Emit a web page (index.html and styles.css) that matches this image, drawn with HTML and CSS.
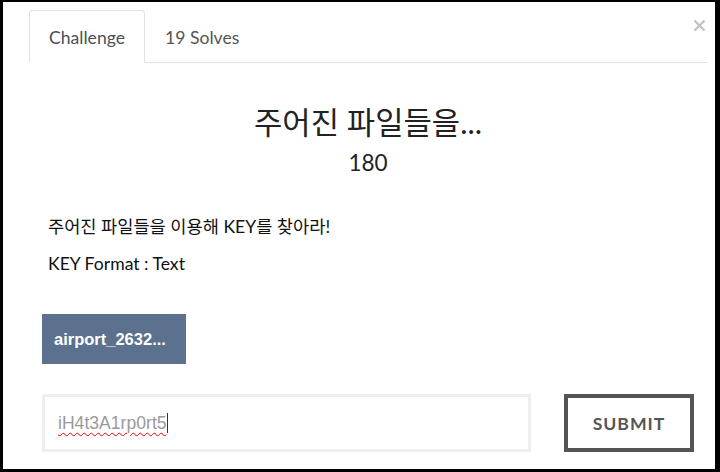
FILE: index.html
```html
<!DOCTYPE html>
<html lang="ko">
<head>
<meta charset="utf-8">
<link rel="stylesheet" href="styles.css">
</head>
<body>
<div class="modal">
  <button class="close" aria-label="Close">
    <svg width="13" height="13" viewBox="0 0 13 13"><path d="M1.5 1.5 L11.5 11.5 M11.5 1.5 L1.5 11.5" stroke="#c2c2c2" stroke-width="2.4" fill="none"/></svg>
  </button>
  <nav class="tabs">
    <a class="tab active">Challenge</a>
    <a class="tab">19 Solves</a>
  </nav>
  <div class="content">
    <h3 class="title">주어진 파일들을...</h3>
    <h4 class="value">180</h4>
    <div class="desc">
      <p>주어진 파일들을 이용해 KEY를 찾아라!</p>
      <p>KEY Format : Text</p>
    </div>
    <div class="files">
      <a class="file-btn">airport_2632...</a>
    </div>
    <div class="submit-row">
      <div class="input"><span class="typed">iH4t3A1rp0rt5</span><span class="caret"></span></div>
      <button class="submit">SUBMIT</button>
    </div>
  </div>
</div>
</body>
</html>
```
FILE: styles.css
```css
* { box-sizing: border-box; }
html, body { margin: 0; }
body {
  background: #000;
  padding: 2px 5px 3px 3px;
  font-family: Lato, "Noto Sans CJK KR", sans-serif;
  color: #212529;
}
.modal {
  position: relative;
  background: #fff;
  height: 467px;
  padding: 8px 8px 0 26px;
}
.close {
  position: absolute;
  top: 17px;
  left: 690px;
  width: 13px;
  height: 13px;
  padding: 0;
  border: 0;
  background: none;
  display: block;
}
.close svg { display: block; }
.tabs {
  display: flex;
  border-bottom: 1px solid #dee2e6;
}
.tab {
  display: block;
  font-size: 17.6px;
  line-height: 24px;
  padding: 15px 19px 12px;
  border: 1px solid transparent;
  border-radius: 4px 4px 0 0;
  margin-bottom: -1px;
  color: #555;
}
.tab.active {
  border-color: #dee2e6 #dee2e6 #fff;
  color: #495057;
}
.content {
  padding-left: 13px;
  padding-right: 13px;
}
.title {
  margin: 42px 0 0;
  text-align: center;
  font-size: 30.8px;
  font-weight: 400;
  line-height: 36px;
  color: #222;
}
.value {
  margin: 8px 0 0;
  text-align: center;
  font-size: 22.5px;
  font-weight: 400;
  line-height: 28px;
  color: #222;
}
.desc {
  margin-top: 37px;
  padding-left: 6px;
  font-size: 17.6px;
  line-height: 25px;
  color: #111;
}
.desc p { margin: 0 0 12px; }
.files { margin-top: 38px; }
.file-btn {
  display: inline-flex;
  align-items: center;
  width: 144px;
  height: 50px;
  padding-left: 12px;
  background: #5b718e;
  color: #fff;
  font-family: "Liberation Sans", Arial, sans-serif;
  font-weight: 700;
  font-size: 16.5px;
}
.submit-row {
  display: flex;
  align-items: stretch;
  margin-top: 30px;
  gap: 33px;
}
.input {
  width: 489px;
  height: 58px;
  border: 3px solid #eee;
  padding: 0 0 0 13px;
  display: flex;
  align-items: center;
  font-family: "Liberation Sans", Arial, sans-serif;
  font-size: 17.6px;
  color: #9a9a9a;
}
.typed {
  text-decoration: underline wavy #e00;
  text-decoration-thickness: 1px;
  text-underline-offset: 3px;
}
.caret {
  display: inline-block;
  width: 1px;
  height: 20px;
  background: #333;
}
.submit {
  width: 130px;
  height: 58px;
  border: 4px solid #555;
  background: #fff;
  font-family: Lato, sans-serif;
  font-weight: 700;
  font-size: 17.6px;
  letter-spacing: 1px;
  color: #555;
  padding: 0;
}
```
